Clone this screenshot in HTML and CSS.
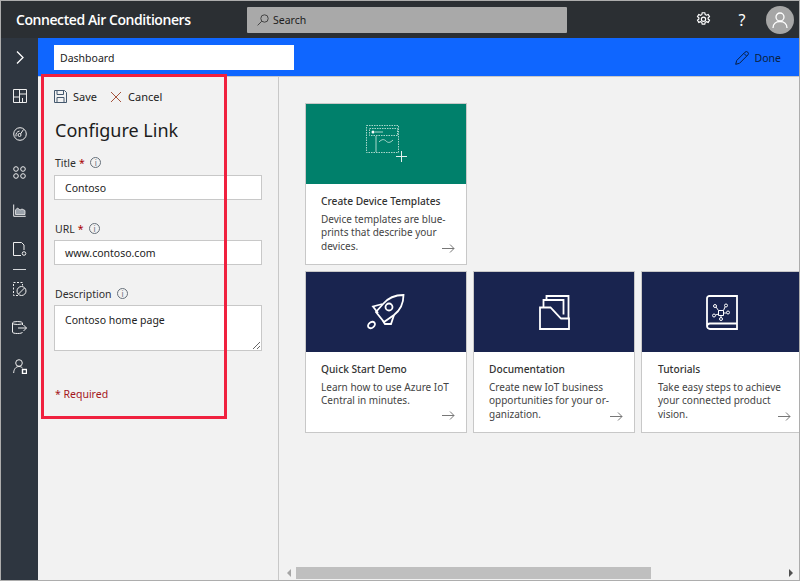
FILE: index.html
```html
<!DOCTYPE html>
<html lang="en">
<head>
    <meta charset="UTF-8">
    <meta name="viewport" content="width=device-width, initial-scale=1.0">
    <title>Connected Air Conditioners</title>
    <link rel="stylesheet" href="styles.css">
</head>
<body>
    <div class="app">
        <header class="topbar">
            <h1 class="app-title">Connected Air Conditioners</h1>
            <div class="search">
                <svg class="search-icon" width="12" height="12" viewBox="0 0 12 12"><circle cx="7.5" cy="4.5" r="3.7"/><path d="M4.8 7.2 .6 11.4"/></svg>
                <span>Search</span>
            </div>
            <div class="top-actions">
                <svg class="top-gear" width="15" height="15" viewBox="0 0 14 14"><path d="M5.8.7h2.4l.4 1.7 1.2.6 1.6-.7 1.2 2-1.3 1.1v1.2l1.3 1.1-1.2 2-1.6-.7-1.2.6-.4 1.7H5.8l-.4-1.7-1.2-.6-1.6.7-1.2-2 1.3-1.1V5.5L1.4 4.4l1.2-2 1.6.7 1.2-.6z"/><circle cx="7" cy="6.7" r="2"/></svg>
                <span class="top-help">?</span>
                <div class="avatar">
                    <svg width="16" height="16" viewBox="0 0 16 16"><circle cx="8" cy="5" r="4"/><path d="M1 16c0-4 3-6.5 7-6.5s7 2.5 7 6.5"/></svg>
                </div>
            </div>
        </header>
        <div class="workspace">
            <nav class="sidenav">
                <div class="nav-item"><svg class="nav-chevron" width="8" height="13" viewBox="0 0 8 13"><path d="M1 .5 7 6.500l-6 6"/></svg></div>
                <div class="nav-item"><svg width="14" height="14" viewBox="0 0 14 14"><path d="M.5.5h13v13H.5zM6.500.5v13M6.500 5h7M.5 8h6M9.500 9v4.500"/></svg></div>
                <div class="nav-item"><svg width="14" height="14" viewBox="0 0 14 14"><circle cx="7" cy="7" r="6.3"/><circle cx="6.5" cy="8" r="1.5"/><path d="M7.500 7 10.500 2.500M3 9.500c-.5-3 1-5 3.500-5.500"/></svg></div>
                <div class="nav-item"><svg width="13" height="13" viewBox="0 0 13 13"><circle cx="3" cy="3" r="2.3"/><circle cx="10" cy="3" r="2.3"/><circle cx="3" cy="10" r="2.3"/><circle cx="10" cy="10" r="2.3"/></svg></div>
                <div class="nav-item"><svg width="13" height="13" viewBox="0 0 13 13"><path d="M.7.5v11.800h12"/><path class="nav-fill" d="M2.500 10.500V6l2-2 2.500 2 2-1 3 1.500v4z"/></svg></div>
                <div class="nav-item"><svg width="14" height="15" viewBox="0 0 14 15"><path d="M8 13.500H.5V.5h8l2.500 2.500v5"/><circle cx="11" cy="11.5" r="1.8"/></svg></div>
                <div class="nav-sep"></div>
                <div class="nav-item"><svg width="14" height="15" viewBox="0 0 14 15"><path class="nav-dash" d="M5 13.500H.5V.5h9v3"/><circle cx="8.5" cy="9" r="4.5"/><path d="M5.500 12 11.500 6"/></svg></div>
                <div class="nav-item"><svg width="15" height="13" viewBox="0 0 15 13"><ellipse cx="5.5" cy="2" rx="5" ry="1.5"/><path d="M.5 2v9c0 1 2 1.500 5 1.500s5-.5 5-1.500M10.500 2v2M6 7h8.500M11.500 4l3 3-3 3"/></svg></div>
                <div class="nav-item"><svg width="14" height="15" viewBox="0 0 14 15"><circle cx="6" cy="4" r="3.3"/><path d="M.7 14c0-3.500 2-6.500 5.300-6.500 1.500 0 2.500.5 3.500 1.500"/><rect class="nav-square" x="9.5" y="10.5" width="4" height="4"/></svg></div>
            </nav>
            <div class="main">
                <div class="dash-bar">
                    <div class="dash-name">Dashboard</div>
                    <div class="done">
                        <svg width="14" height="14" viewBox="0 0 14 14"><path d="M.7 13.300 1.700 9.500 10 1.200a1.400 1.400 0 0 1 2.800 2.800L4.500 12.300zM9 2.500 11.500 5"/></svg>
                        <span>Done</span>
                    </div>
                </div>
                <div class="panes">
                    <aside class="panel">
                        <div class="panel-actions">
                            <span class="panel-action">
                                <svg width="13" height="13" viewBox="0 0 13 13"><path d="M.5.5h10l2 2v10H.5z"/><path d="M3 .5v4h6.500v-4M3 12.500V7.500h7v5"/></svg>
                                Save
                            </span>
                            <span class="panel-action">
                                <svg class="cancel-icon" width="12" height="12" viewBox="0 0 12 12"><path d="M1 1l10 10M11 1 1 11"/></svg>
                                Cancel
                            </span>
                        </div>
                        <h2 class="panel-title">Configure Link</h2>
                        <div class="field">
                            <label class="field-label">Title <span class="req">*</span><span class="info">i</span></label>
                            <div class="field-box">Contoso</div>
                        </div>
                        <div class="field">
                            <label class="field-label">URL <span class="req">*</span><span class="info">i</span></label>
                            <div class="field-box">www.contoso.com</div>
                        </div>
                        <div class="field">
                            <label class="field-label">Description<span class="info">i</span></label>
                            <div class="field-box field-area">Contoso home page</div>
                        </div>
                        <p class="required-note">* Required</p>
                    </aside>
                    <section class="content">
                        <div class="tiles">
                            <div class="tile-row">
                                <article class="tile">
                                    <div class="tile-art art-green">
                                        <svg class="art-template" width="41" height="38" viewBox="0 0 41 38"><rect class="dots" x=".5" y=".5" width="32" height="27"/><rect class="dots" x="3.5" y="3.5" width="28" height="7"/><circle class="solid" cx="7" cy="7" r="1.5"/><path d="M9 7h8M10 11v16M13 17c3-3 5-3 7-1s4 2 7-1"/><path class="plus" d="M30 31.500h11M35.500 26v11"/></svg>
                                    </div>
                                    <div class="tile-body">
                                        <div class="tile-text">
                                            <h3>Create Device Templates</h3>
                                            <p>Device templates are blue-prints that describe your devices.</p>
                                        </div>
                                        <svg class="arrow" width="13" height="9" viewBox="0 0 13 9"><path d="M0 4.500h12M8 .5l4 4-4 4"/></svg>
                                    </div>
                                </article>
                            </div>
                            <div class="tile-row">
                                <article class="tile">
                                    <div class="tile-art">
                                        <svg width="38" height="36" viewBox="0 0 38 36"><path d="M36.500 1c0 8-3 15-9.500 20L17 28 9 18l7-8c5-6 12-9 20.500-9z"/><circle cx="22" cy="13" r="3.5"/><path d="M15.500 10 6 12.500 11 19M27 21l-3 9h-6l-2-3"/><ellipse cx="4.5" cy="31" rx="3.8" ry="2.8" transform="rotate(-40 4.5 31)"/></svg>
                                    </div>
                                    <div class="tile-body">
                                        <div class="tile-text">
                                            <h3>Quick Start Demo</h3>
                                            <p>Learn how to use Azure IoT Central in minutes.</p>
                                        </div>
                                        <svg class="arrow" width="13" height="9" viewBox="0 0 13 9"><path d="M0 4.500h12M8 .5l4 4-4 4"/></svg>
                                    </div>
                                </article>
                                <article class="tile">
                                    <div class="tile-art">
                                        <svg width="31" height="35" viewBox="0 0 31 35"><path d="M1 12.500h10.500L22 23.500h8V34H1zM4.500 12V5h20v14.500M7.500 4.500V1h22v22"/></svg>
                                    </div>
                                    <div class="tile-body">
                                        <div class="tile-text">
                                            <h3>Documentation</h3>
                                            <p>Create new IoT business opportunities for your or-ganization.</p>
                                        </div>
                                        <svg class="arrow" width="13" height="9" viewBox="0 0 13 9"><path d="M0 4.500h12M8 .5l4 4-4 4"/></svg>
                                    </div>
                                </article>
                                <article class="tile">
                                    <div class="tile-art">
                                        <svg width="32" height="35" viewBox="0 0 32 35"><path d="M3.500 1H31v33H4a3 3 0 0 1-3-3V3.500A2.500 2.500 0 0 1 3.500 1zM1 31a3 3 0 0 1 3-2.500h27"/><g class="thin"><path d="M12.500 15.500h5v5h-5zM12.500 15.500 10 12M17.500 15.500 19 12M17.500 18h3M15 20.500V23M12.500 19l-3 1"/><circle cx="9" cy="11" r="1.5"/><circle cx="20" cy="10.5" r="1.5"/><circle cx="22" cy="17.5" r="1.5"/><circle cx="15" cy="24" r="1.5"/><circle cx="8" cy="20.5" r="1.5"/></g></svg>
                                    </div>
                                    <div class="tile-body">
                                        <div class="tile-text">
                                            <h3>Tutorials</h3>
                                            <p>Take easy steps to achieve your connected product vision.</p>
                                        </div>
                                        <svg class="arrow" width="13" height="9" viewBox="0 0 13 9"><path d="M0 4.500h12M8 .5l4 4-4 4"/></svg>
                                    </div>
                                </article>
                            </div>
                        </div>
                        <div class="hscroll">
                            <span class="hscroll-left"></span>
                            <div class="hscroll-track"><div class="hscroll-thumb"></div></div>
                            <span class="hscroll-right"></span>
                        </div>
                    </section>
                </div>
            </div>
        </div>
        <!-- red callout drawn on top of the screenshot -->
        <div class="callout"></div>
    </div>
</body>
</html>
```

FILE: styles.css
```css
* {
    box-sizing: border-box;
}

html, body {
    margin: 0;
    padding: 0;
    height: 100%;
    overflow: hidden;
}

body {
    font-family: "Noto Sans", "Open Sans", sans-serif;
    font-size: 10.5px;
    color: #222;
}

svg {
    display: block;
    fill: none;
    stroke: currentColor;
}

.app {
    position: relative;
    width: 800px;
    height: 581px;
    border: 1px solid #adadad;
    display: flex;
    flex-direction: column;
    overflow: hidden;
    background-color: #f2f2f2;
}

/* Top bar */
.topbar {
    height: 37px;
    flex: none;
    background-color: #2b2f33;
    color: #fff;
    display: flex;
    align-items: center;
    padding-left: 15px;
}

.app-title {
    margin: 0;
    width: 231px;
    font-family: "Open Sans", sans-serif;
    font-size: 14px;
    font-weight: 600;
    letter-spacing: -0.43px;
    white-space: nowrap;
}

.search {
    width: 320px;
    height: 26px;
    background-color: #a9a9a9;
    border-radius: 1px;
    display: flex;
    align-items: center;
    gap: 4px;
    padding-left: 10px;
    color: #1d1d1d;
}

.search-icon {
    color: #444;
}

.top-actions {
    margin-left: auto;
    display: flex;
    align-items: center;
    padding-right: 5px;
}

.top-gear {
    margin-right: 26px;
    stroke-width: 1.1;
}

.top-help {
    width: 10px;
    margin-right: 19px;
    font-size: 16px;
    text-align: center;
}

.avatar {
    width: 28px;
    height: 28px;
    border-radius: 50%;
    background-color: #a6a6a6;
    display: flex;
    align-items: center;
    justify-content: center;
}

.avatar svg {
    stroke-width: 1.3;
}

.workspace {
    flex: 1;
    display: flex;
    min-height: 0;
}

/* Left nav */
.sidenav {
    width: 37px;
    flex: none;
    background-color: #2e3640;
    color: #eee;
    display: flex;
    flex-direction: column;
    align-items: center;
}

.nav-item {
    height: 38.4px;
    display: flex;
    align-items: center;
    justify-content: center;
    flex: none;
}

.nav-chevron {
    color: #fff;
    stroke-width: 1.3;
}

.nav-fill {
    fill: #9aa2ab;
    stroke: #eee;
    stroke-width: 0.8;
}

.nav-dash {
    stroke-dasharray: 2 1.5;
}

.nav-square {
    fill: #2e3640;
    stroke: #fff;
    stroke-width: 1.4;
}

.nav-sep {
    width: 13px;
    height: 1px;
    margin-top: 1px;
    background-color: #d5d8db;
}

.main {
    flex: 1;
    min-width: 0;
    display: flex;
    flex-direction: column;
}

/* Blue bar */
.dash-bar {
    height: 39px;
    flex: none;
    background-color: #0f66ff;
    border-bottom: 1px solid #c8c8c8;
    display: flex;
    align-items: center;
    padding: 1px 18px 0 16px;
}

.dash-name {
    width: 240px;
    height: 25px;
    background-color: #fff;
    padding: 1px 0 0 6px;
    line-height: 25px;
}

.done {
    margin-left: auto;
    display: flex;
    align-items: center;
    gap: 6px;
    color: #0a1e40;
}

.panes {
    flex: 1;
    display: flex;
    min-height: 0;
}

/* Configure panel */
.panel {
    width: 241px;
    flex: none;
    border-right: 1px solid #c8c8c8;
    padding: 12px 16px 0;
}

.panel-actions {
    display: flex;
    gap: 13px;
    height: 15px;
    align-items: center;
    font-size: 11px;
}

.panel-action {
    display: flex;
    align-items: center;
    gap: 6px;
}

.panel-action svg {
    color: #44586e;
}

.panel-action .cancel-icon {
    color: #a5533c;
}

.panel-title {
    margin: 13px 0 0 1px;
    font-size: 18px;
    font-weight: 400;
    line-height: 26px;
    color: #1c1c1c;
}

.field {
    margin-top: 12px;
}

.field + .field {
    margin-top: 21px;
}

.field-label {
    display: flex;
    align-items: center;
    height: 15px;
    margin: 0 0 4px 1px;
    gap: 3px;
    color: #2e2e2e;
}

.panel-title + .field .field-label {
    margin-bottom: 5px;
}

.req {
    color: #a80000;
}

.info {
    width: 11px;
    height: 11px;
    margin-left: 2.5px;
    border: 1px solid #66707a;
    border-radius: 50%;
    color: #66707a;
    font-size: 8px;
    line-height: 9px;
    text-align: center;
}

.field-box {
    width: 208px;
    height: 25px;
    background-color: #fff;
    border: 1px solid #c8c8c8;
    padding: 1px 0 0 10px;
    line-height: 23px;
}

.field-area {
    height: 46px;
    padding-top: 0;
    line-height: 28px;
    resize: both;
    overflow: auto;
}

.required-note {
    margin: 36px 0 0 1px;
    color: #a4161c;
}

/* Tiles */
.content {
    flex: 1;
    min-width: 0;
    display: flex;
    flex-direction: column;
}

.tiles {
    flex: 1;
    min-height: 0;
    padding: 26px 0 0 26px;
    display: flex;
    flex-direction: column;
    gap: 6px;
}

.tile-row {
    display: flex;
    gap: 6px;
}

.tile {
    width: 162px;
    height: 162px;
    flex: none;
    background-color: #fff;
    border: 1px solid #c8c8c8;
}

.tile-art {
    height: 80px;
    background-color: #19244f;
    color: #fff;
    display: flex;
    align-items: center;
    justify-content: center;
}

.tile-art svg {
    stroke-width: 1.8;
}

.art-green {
    background-color: #00806b;
    color: #a9d6cb;
}

.tile-art .art-template {
    stroke-width: 1;
}

.art-template .dots {
    stroke-dasharray: 1.5 1;
}

.art-template .solid {
    fill: #fff;
    stroke: none;
}

.art-template .plus {
    stroke: #e4f2ee;
}

.tile-art .thin {
    stroke-width: 1;
}

.tile-body {
    display: grid;
    height: 80px;
    padding: 10px 11px 12px 15px;
}

.tile:nth-child(3) .tile-body {
    padding-left: 16px;
}

.tile-text, .arrow {
    grid-area: 1 / 1;
}

.tile-text h3 {
    margin: 0 0 5px;
    font-size: 10.2px;
    font-weight: 500;
    line-height: 14px;
    color: #333;
}

.tile-text p {
    margin: 0;
    font-size: 10px;
    line-height: 13.3px;
    color: #444;
}

.arrow {
    justify-self: end;
    align-self: end;
    color: #777;
}

/* Scrollbar */
.hscroll {
    height: 15px;
    flex: none;
    display: flex;
    align-items: center;
    padding: 0 5px;
}

.hscroll-left, .hscroll-right {
    width: 0;
    height: 0;
    border-top: 4px solid transparent;
    border-bottom: 4px solid transparent;
}

.hscroll-left {
    border-right: 4px solid #a6a6a6;
    margin-left: 3px;
}

.hscroll-right {
    border-left: 4px solid #505050;
    margin-right: 1px;
}

.hscroll-track {
    flex: 1;
    padding-left: 5px;
}

.hscroll-thumb {
    width: 355px;
    height: 12px;
    background-color: #bfbfbf;
}

/* Red callout */
.callout {
    position: absolute;
    left: 40px;
    top: 73px;
    width: 186px;
    height: 345px;
    border: 3px solid #f0213f;
}
```
